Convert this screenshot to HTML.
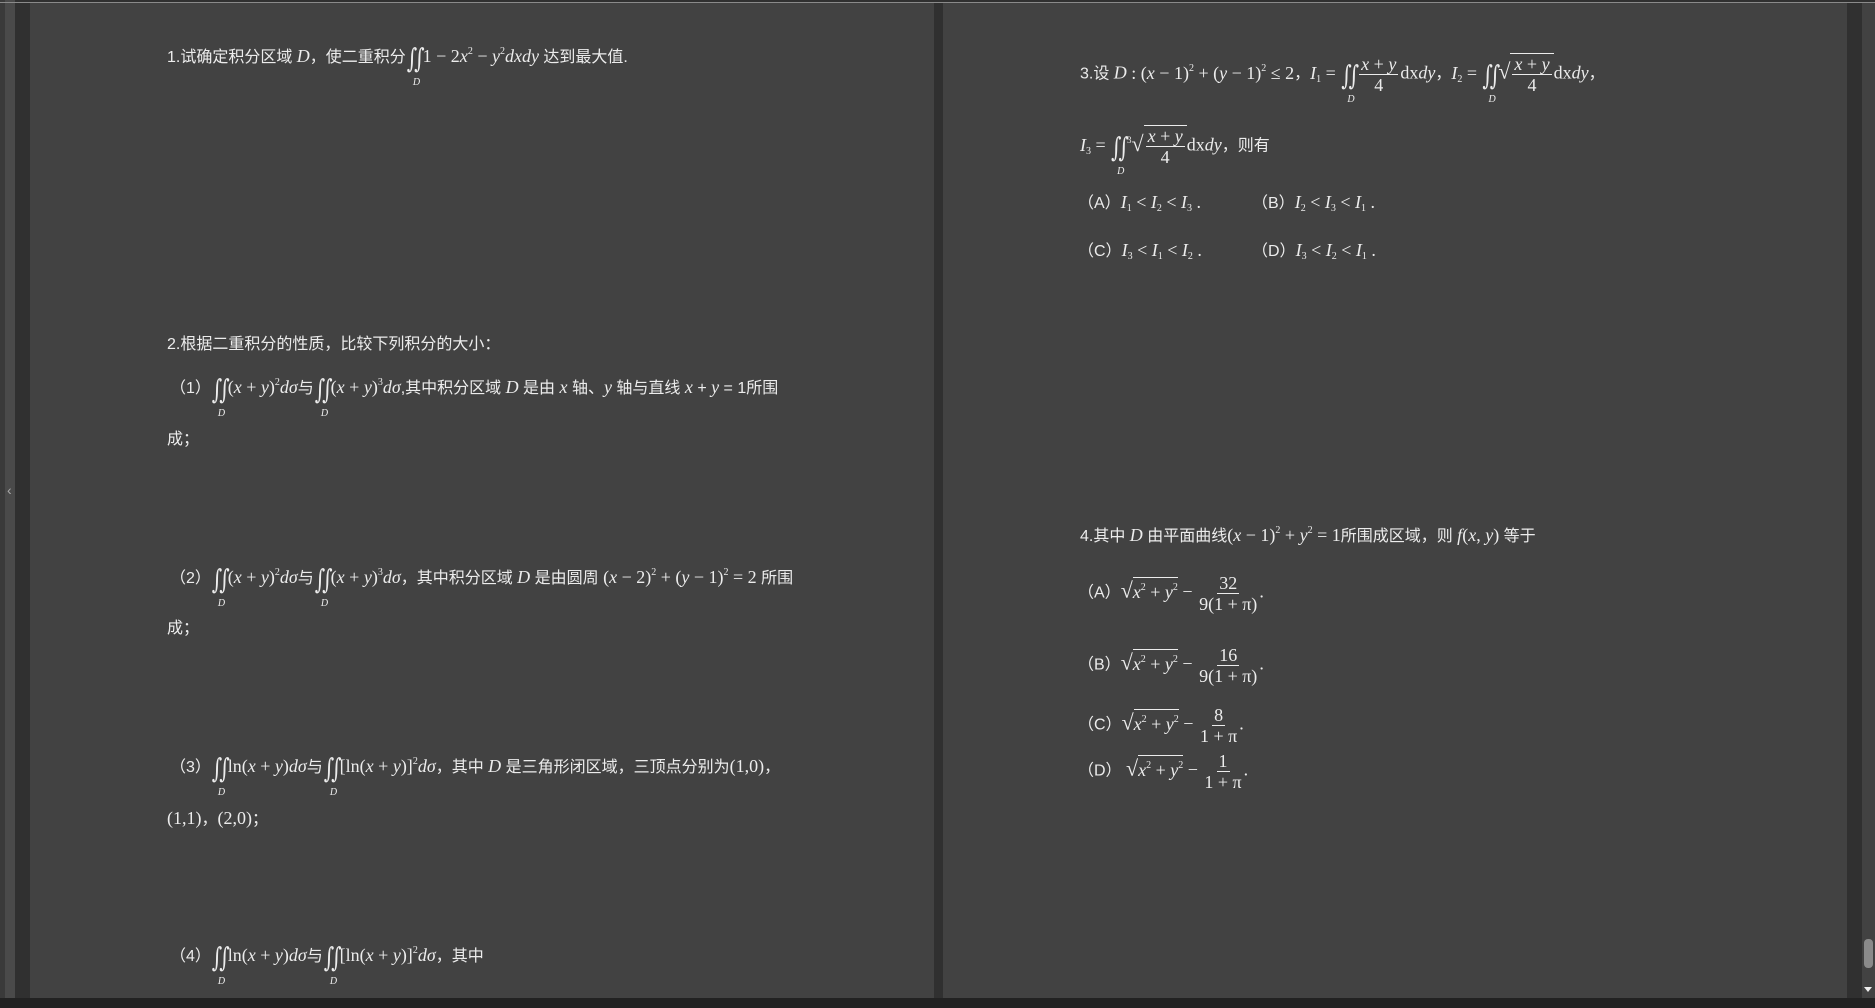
<!DOCTYPE html>
<html><head><meta charset="utf-8">
<style>
*{margin:0;padding:0;box-sizing:border-box}
body{width:1875px;height:1008px;background:#303030;position:relative;overflow:hidden;font-family:"Liberation Sans","Noto Sans CJK SC",sans-serif;color:#ececec;font-size:16px}
.abs{position:absolute}
.page{position:absolute;top:3px;height:995px;background:#424242}
.t{position:absolute;white-space:nowrap;line-height:20px}
.m{font-family:"Liberation Serif",serif;font-size:18px}
i{font-family:"Liberation Serif",serif;font-size:18px}
sup{font-size:10px;vertical-align:8px;font-family:"Liberation Serif",serif}
sub{font-size:10px;vertical-align:-3px;font-family:"Liberation Serif",serif}
.int{display:inline-block;position:relative;font-family:"DejaVu Serif",serif;font-size:20px;vertical-align:-3px;line-height:20px;margin:0 1px}
.int s{text-decoration:none;display:inline-block;transform:scaleY(1.35);margin-right:-3px}
.int b{position:absolute;left:6px;top:25px;font-size:10px;font-style:italic;font-weight:normal;font-family:"Liberation Serif",serif}
.fr{display:inline-flex;flex-direction:column;align-items:center;vertical-align:middle;font-family:"Liberation Serif",serif;font-size:18px;line-height:20px;margin:0 2px}
.fr span:first-child{border-bottom:1px solid #ececec;padding:0 2px}
.sq{font-family:"Liberation Serif",serif;font-size:22px}
.ov{border-top:1px solid #ececec;display:inline-block;line-height:20px}
</style></head><body>
<div class="abs" style="left:0;top:0;width:5px;height:1008px;background:#3a3a3a"></div>
<div class="abs" style="left:5px;top:0;width:10px;height:1008px;background:#4a4a4a"></div>
<div class="abs" style="left:7px;top:482px;color:#aaa;font-size:14px">‹</div>
<div class="abs" style="left:0;top:2px;width:1875px;height:1px;background:#8a8a8a"></div>
<div class="page" style="left:30px;width:904px"></div>
<div class="page" style="left:943px;width:904px"></div>
<div class="abs" style="left:1862px;top:3px;width:13px;height:995px;background:#424242"></div>
<div class="abs" style="left:1864px;top:939px;width:9px;height:29px;border-radius:4px;background:#8a8a8a"></div>
<div class="abs" style="left:1864px;top:987px;width:0;height:0;border-left:4.5px solid transparent;border-right:4.5px solid transparent;border-top:5px solid #eee"></div>
<div class="abs" style="left:0;top:998px;width:1875px;height:10px;background:#222"></div>

<div class="t" style="left:167px;top:42px">1.试确定积分区域 <i>D</i>，使二重积分<span class="int"><s>∫</s><s>∫</s><b>D</b></span><span class="m">1 − 2<i>x</i><sup>2</sup> − <i>y</i><sup>2</sup><i>dxdy</i></span> 达到最大值.</div>

<div class="t" style="left:167px;top:335px">2.根据二重积分的性质，比较下列积分的大小：</div>
<div class="t" style="left:170px;top:373px">（1）<span class="int"><s>∫</s><s>∫</s><b>D</b></span><span class="m">(<i>x</i> + <i>y</i>)<sup>2</sup><i>dσ</i></span>与<span class="int"><s>∫</s><s>∫</s><b>D</b></span><span class="m">(<i>x</i> + <i>y</i>)<sup>3</sup><i>dσ</i></span>,其中积分区域 <i>D</i> 是由 <i>x</i> 轴、<i>y</i> 轴与直线 <i>x</i> + <i>y</i> = 1所围</div>
<div class="t" style="left:167px;top:430px">成；</div>

<div class="t" style="left:170px;top:563px">（2）<span class="int"><s>∫</s><s>∫</s><b>D</b></span><span class="m">(<i>x</i> + <i>y</i>)<sup>2</sup><i>dσ</i></span>与<span class="int"><s>∫</s><s>∫</s><b>D</b></span><span class="m">(<i>x</i> + <i>y</i>)<sup>3</sup><i>dσ</i></span>，其中积分区域 <i>D</i> 是由圆周 <span class="m">(<i>x</i> − 2)<sup>2</sup> + (<i>y</i> − 1)<sup>2</sup> = 2</span> 所围</div>
<div class="t" style="left:167px;top:619px">成；</div>

<div class="t" style="left:170px;top:752px">（3）<span class="int"><s>∫</s><s>∫</s><b>D</b></span><span class="m">ln(<i>x</i> + <i>y</i>)<i>dσ</i></span>与<span class="int"><s>∫</s><s>∫</s><b>D</b></span><span class="m">[ln(<i>x</i> + <i>y</i>)]<sup>2</sup><i>dσ</i></span>，其中 <i>D</i> 是三角形闭区域，三顶点分别为<span class="m">(1,0)</span>，</div>
<div class="t" style="left:167px;top:808px"><span class="m">(1,1)</span>，<span class="m">(2,0)</span>；</div>

<div class="t" style="left:170px;top:941px">（4）<span class="int"><s>∫</s><s>∫</s><b>D</b></span><span class="m">ln(<i>x</i> + <i>y</i>)<i>dσ</i></span>与<span class="int"><s>∫</s><s>∫</s><b>D</b></span><span class="m">[ln(<i>x</i> + <i>y</i>)]<sup>2</sup><i>dσ</i></span>，其中</div>

<div class="t" style="left:1080px;top:53px">3.设 <i>D</i><span class="m"> : (<i>x</i> − 1)<sup>2</sup> + (<i>y</i> − 1)<sup>2</sup> ≤ 2</span>，<span class="m"><i>I</i><sub>1</sub> = </span><span class="int"><s>∫</s><s>∫</s><b>D</b></span><span class="fr"><span><i>x</i> + <i>y</i></span><span>4</span></span><span class="m">dx<i>dy</i></span>，<span class="m"><i>I</i><sub>2</sub> = </span><span class="int"><s>∫</s><s>∫</s><b>D</b></span><span class="sq">√</span><span class="ov"><span class="fr"><span><i>x</i> + <i>y</i></span><span>4</span></span></span><span class="m">dx<i>dy</i></span>，</div>
<div class="t" style="left:1080px;top:125px"><span class="m"><i>I</i><sub>3</sub> = </span><span class="int"><s>∫</s><s>∫</s><b>D</b></span><span class="sq"><sup style="font-size:9px">3</sup>√</span><span class="ov"><span class="fr"><span><i>x</i> + <i>y</i></span><span>4</span></span></span><span class="m">dx<i>dy</i></span>，则有</div>
<div class="t" style="left:1078px;top:192px">（A）<span class="m"><i>I</i><sub>1</sub> &lt; <i>I</i><sub>2</sub> &lt; <i>I</i><sub>3</sub> .</span></div>
<div class="t" style="left:1252px;top:192px">（B）<span class="m"><i>I</i><sub>2</sub> &lt; <i>I</i><sub>3</sub> &lt; <i>I</i><sub>1</sub> .</span></div>
<div class="t" style="left:1078px;top:240px">（C）<span class="m"><i>I</i><sub>3</sub> &lt; <i>I</i><sub>1</sub> &lt; <i>I</i><sub>2</sub> .</span></div>
<div class="t" style="left:1252px;top:240px">（D）<span class="m"><i>I</i><sub>3</sub> &lt; <i>I</i><sub>2</sub> &lt; <i>I</i><sub>1</sub> .</span></div>

<div class="t" style="left:1080px;top:521px">4.其中 <i>D</i> 由平面曲线<span class="m">(<i>x</i> − 1)<sup>2</sup> + <i>y</i><sup>2</sup> = 1</span>所围成区域，则 <span class="m"><i>f</i>(<i>x</i>, <i>y</i>)</span> 等于</div>
<div class="t" style="left:1078px;top:573px">（A）<span class="sq">√</span><span class="ov m"><i>x</i><sup>2</sup> + <i>y</i><sup>2</sup></span><span class="m"> − </span><span class="fr"><span>32</span><span>9(1 + π)</span></span><span class="m">.</span></div>
<div class="t" style="left:1078px;top:645px">（B）<span class="sq">√</span><span class="ov m"><i>x</i><sup>2</sup> + <i>y</i><sup>2</sup></span><span class="m"> − </span><span class="fr"><span>16</span><span>9(1 + π)</span></span><span class="m">.</span></div>
<div class="t" style="left:1078px;top:705px">（C）<span class="sq">√</span><span class="ov m"><i>x</i><sup>2</sup> + <i>y</i><sup>2</sup></span><span class="m"> − </span><span class="fr"><span>8</span><span>1 + π</span></span><span class="m">.</span></div>
<div class="t" style="left:1078px;top:751px">（D） <span class="sq">√</span><span class="ov m"><i>x</i><sup>2</sup> + <i>y</i><sup>2</sup></span><span class="m"> − </span><span class="fr"><span>1</span><span>1 + π</span></span><span class="m">.</span></div>
</body></html>
